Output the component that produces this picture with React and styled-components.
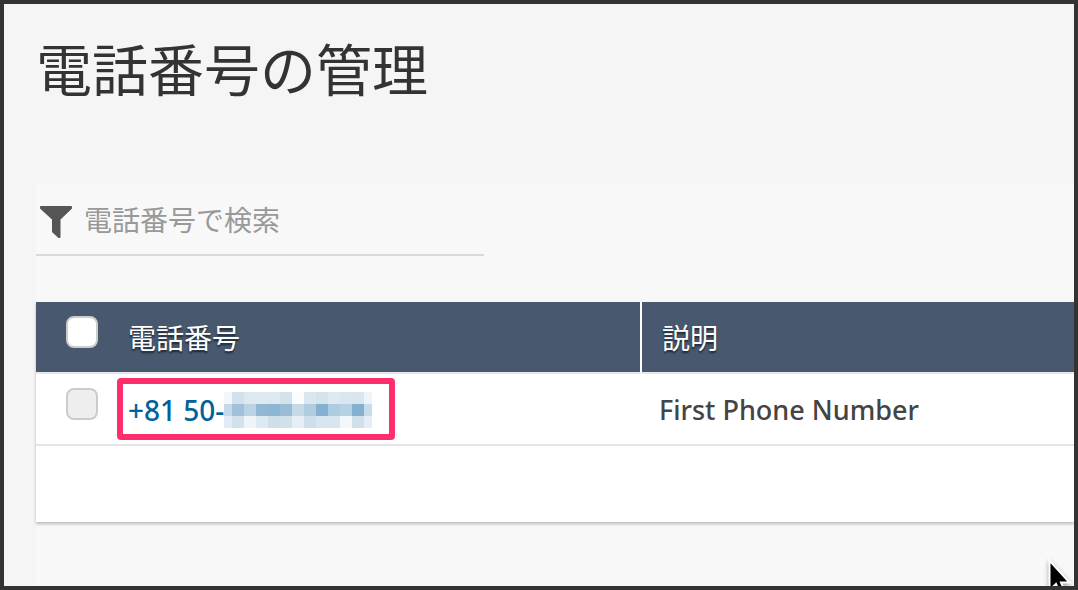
import React from "react";
import styled, { createGlobalStyle } from "styled-components";

const GlobalStyle = createGlobalStyle`
  *, *::before, *::after { box-sizing: border-box; }
  body {
    margin: 0;
    background: #f5f5f5;
    color: #444;
    font-family: "Noto Sans", "Noto Sans CJK JP", sans-serif;
  }
`;

const Frame = styled.div`
  position: relative;
  display: flex;
  flex-direction: column;
  min-height: 100vh;
  padding-left: 32px;
  border: 4px solid #333;
  background: #f5f5f5;
  overflow: hidden;
`;

const PageHeader = styled.header`
  height: 180px;
  padding-top: 24px;
`;

const Title = styled.h1`
  margin: 0;
  color: #333;
  font-family: "Noto Sans CJK JP", sans-serif;
  font-size: 56px;
  font-weight: 400;
  line-height: 78px;
`;

const Panel = styled.main`
  flex: 1;
  background: #f8f8f8;
`;

const SearchBar = styled.label`
  display: flex;
  align-items: center;
  gap: 12px;
  width: 448px;
  max-width: 100%;
  height: 72px;
  margin-bottom: 46px;
  padding-left: 4px;
  border-bottom: 2px solid #d9d9d9;
`;

const SearchInput = styled.input`
  flex: 1;
  min-width: 0;
  height: 48px;
  padding: 0;
  border: 0;
  outline: 0;
  background: transparent;
  color: #444;
  font-family: "Noto Sans CJK JP", sans-serif;
  font-size: 28px;
  &::placeholder { color: #999; opacity: 1; }
`;

const NumberTable = styled.table`
  width: 100%;
  table-layout: fixed;
  border-collapse: separate;
  border-spacing: 0;
  background: #fff;
  box-shadow: 0 2px 3px rgba(0, 0, 0, 0.25);
`;

const CheckColumn = styled.col`
  width: 92px;
`;

const NumberColumn = styled.col`
  width: 514px;
`;

const HeadCell = styled.th`
  height: 72px;
  padding: 0 0 0 ${(p) => (p.$divided ? "20px" : "0")};
  border-right: ${(p) => (p.$divider ? "2px solid #fff" : "0")};
  border-bottom: 2px solid #e8e8e8;
  background: #48596f;
  background-clip: padding-box;
  color: #fff;
  font-family: "Noto Sans CJK JP", sans-serif;
  font-size: 28px;
  font-weight: 400;
  line-height: 40px;
  text-align: left;
  text-shadow: 0 2px 2px rgba(0, 0, 0, 0.6);
`;

const Cell = styled.td`
  height: 72px;
  padding: 0;
  border-bottom: 2px solid #e5e5e5;
`;

const TextCell = styled(Cell)`
  padding: 2px 0 0 ${(p) => (p.$inset ? "17px" : "0")};
  font-size: ${(p) => (p.$inset ? "27px" : "28px")};
  font-weight: 500;
  line-height: 40px;
`;

const FooterCell = styled.td`
  height: 76px;
  padding: 0;
`;

const Checkbox = styled.input`
  appearance: none;
  display: block;
  width: 32px;
  height: 32px;
  margin: 0 0 10px 30px;
  border: 2px solid #ccc;
  border-radius: 8px;
  background: ${(p) => (p.$muted ? "#eee" : "#fff")};
`;

const NumberLink = styled.a`
  position: relative;
  display: inline-flex;
  align-items: center;
  color: #00629b;
  text-decoration: none;
  &::after {
    content: "";
    position: absolute;
    inset: -12px -23px -10px -11px;
    border: 6px solid #ff2f6c;
    border-radius: 4px;
  }
`;

const Funnel = styled.svg`
  flex: none;
  margin-top: 6px;
`;

const Pointer = styled.svg`
  position: absolute;
  right: 2px;
  bottom: -14px;
  filter: drop-shadow(0 2px 2px rgba(0, 0, 0, 0.35));
`;

const MOSAIC = [
  ["#f2f5fa", "#d3e1ed", "#dde9f1", "#dde8f0", "#dde9f1", "#d2e3ec", "#fafcfd", "#dbe7ef", "#d4e3ec", "#dfe9f2", "#d9e7f0", "#d9e6ef", "#eef4f9"],
  ["#c5dae7", "#a0c1d9", "#bad2e4", "#90b8d3", "#8db6d2", "#9abdd5", "#c5dae7", "#b0cde0", "#86b0cf", "#acccdf", "#b5d2e2", "#85b0d0", "#c6dce9"],
  ["#e3ecf5", "#d3e1ed", "#eff4f9", "#deeaf2", "#cddfeb", "#d0e1ea", "#e6eef6", "#cfdeeb", "#dae6ef", "#d9e6ef", "#f3f8fb", "#d0e0eb", "#e4edf5"],
];

function MaskedDigits() {
  return (
    <svg width="148" height="36" viewBox="4 0 148 36" aria-hidden="true" shapeRendering="crispEdges">
      {MOSAIC.map((row, y) =>
        row.map((fill, x) => (
          <rect key={`${x}-${y}`} x={x * 12} y={y * 12} width="12" height="12" fill={fill} />
        ))
      )}
    </svg>
  );
}

function FunnelIcon() {
  return (
    <Funnel width="32" height="32" viewBox="0 0 32 32" aria-hidden="true">
      <path
        fill="#555"
        d="M1 0H31Q32 0 32 1V2Q32 2.500 31.500 3L20.500 13.500V31Q20.500 32 19.300 32H18.500L12.500 26.500Q12 26 12 25V13.500L.5 3Q0 2.500 0 2V1Q0 0 1 0Z"
      />
    </Funnel>
  );
}

export default function App() {
  return (
    <>
      <GlobalStyle />
      <Frame>
        <PageHeader>
          <Title>電話番号の管理</Title>
        </PageHeader>
        <Panel>
          <SearchBar>
            <FunnelIcon />
            <SearchInput type="text" placeholder="電話番号で検索" aria-label="電話番号で検索" />
          </SearchBar>
          <NumberTable>
            <colgroup>
              <CheckColumn />
              <NumberColumn />
              <col />
            </colgroup>
            <thead>
              <tr>
                <HeadCell>
                  <Checkbox type="checkbox" aria-label="すべて選択" />
                </HeadCell>
                <HeadCell $divider>電話番号</HeadCell>
                <HeadCell $divided>説明</HeadCell>
              </tr>
            </thead>
            <tbody>
              <tr>
                <Cell>
                  <Checkbox type="checkbox" $muted aria-label="+81 50-" />
                </Cell>
                <TextCell>
                  <NumberLink href="#number">
                    +81 50-
                    <MaskedDigits />
                  </NumberLink>
                </TextCell>
                <TextCell $inset>First Phone Number</TextCell>
              </tr>
              <tr>
                <FooterCell colSpan={3} />
              </tr>
            </tbody>
          </NumberTable>
        </Panel>
        <Pointer width="24" height="42" viewBox="0 0 24 42" aria-hidden="true">
          <path
            d="M1.500 2.500V32L8 26L12 36L17 34L13 24.500H21.500Z"
            fill="#000"
            stroke="#fff"
            strokeWidth="2"
          />
        </Pointer>
      </Frame>
    </>
  );
}
